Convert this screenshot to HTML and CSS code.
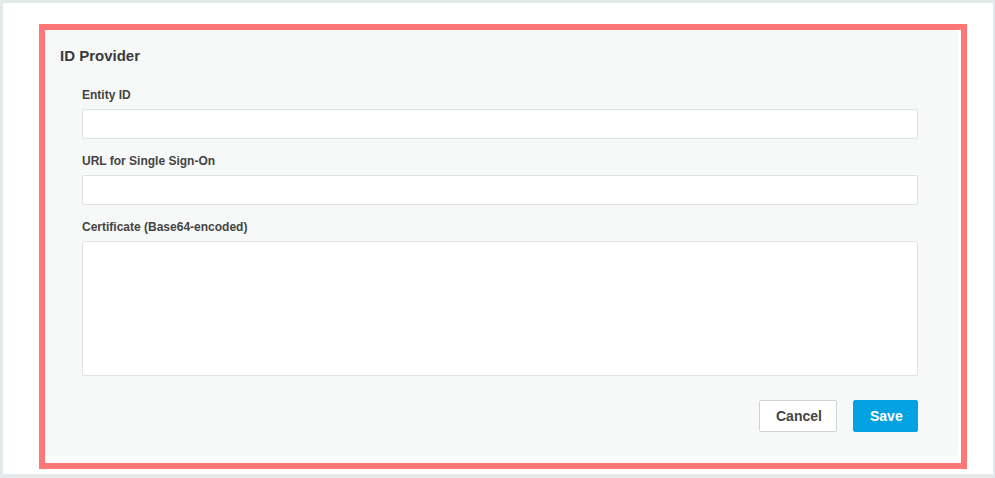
FILE: index.html
```html
<!DOCTYPE html>
<html lang="en">
<head>
<meta charset="utf-8">
<title>ID Provider</title>
<link rel="stylesheet" href="styles.css">
</head>
<body>
<div class="page">
  <div class="frame">
    <section class="panel">
      <h2 class="title">ID Provider</h2>
      <form class="form">
        <label class="label" for="entity">Entity ID</label>
        <input class="field" id="entity" type="text">
        <label class="label" for="sso">URL for Single Sign-On</label>
        <input class="field" id="sso" type="text">
        <label class="label" for="cert">Certificate (Base64-encoded)</label>
        <textarea class="field area" id="cert"></textarea>
        <div class="actions">
          <button type="button" class="btn btn-cancel">Cancel</button>
          <button type="button" class="btn btn-save">Save</button>
        </div>
      </form>
    </section>
  </div>
</div>
</body>
</html>
```
FILE: styles.css
```css
html, body {
  margin: 0;
  padding: 0;
}
body {
  background: #e4e9e9;
  font-family: "Liberation Sans", Arial, sans-serif;
  width: 995px;
  height: 478px;
  overflow: hidden;
}
.page {
  margin: 3px 2px 0 3px;
  height: 471px;
  background: #ffffff;
  box-sizing: border-box;
  padding: 21px 0 0 36px;
}
.frame {
  width: 928px;
  box-sizing: border-box;
  border: 6px solid #ff7676;
  padding: 0 3px 7px 0;
}
.panel {
  background: #f7f8f8;
  border-radius: 0 0 4px 0;
  padding: 17px 40px 24px 15px;
}
.title {
  margin: 0;
  font-size: 15px;
  line-height: 18px;
  font-weight: bold;
  color: #3b3b3b;
}
.form {
  display: flex;
  flex-direction: column;
  margin: 22px 0 0 22px;
}
.label {
  font-size: 12px;
  line-height: 16px;
  font-weight: bold;
  color: #444444;
  margin-bottom: 6px;
}
.field {
  box-sizing: border-box;
  height: 30px;
  margin: 0 0 14px 0;
  border: 1px solid #dfe3e3;
  border-radius: 2px;
  background: #ffffff;
  font: inherit;
  padding: 4px 8px;
  outline: none;
}
.area {
  height: 135px;
  resize: none;
  margin-bottom: 24px;
}
.actions {
  display: flex;
  justify-content: flex-end;
  gap: 16px;
}
.btn {
  box-sizing: border-box;
  height: 32px;
  padding: 0 16px;
  border-radius: 2px;
  font-family: "Liberation Sans", Arial, sans-serif;
  font-size: 14px;
  font-weight: bold;
  cursor: pointer;
}
.btn-cancel {
  width: 78px;
  background: #ffffff;
  border: 1px solid #cfd3d3;
  color: #444444;
}
.btn-save {
  width: 65px;
  background: #03a3e3;
  border: 1px solid #03a3e3;
  color: #ffffff;
}
```
